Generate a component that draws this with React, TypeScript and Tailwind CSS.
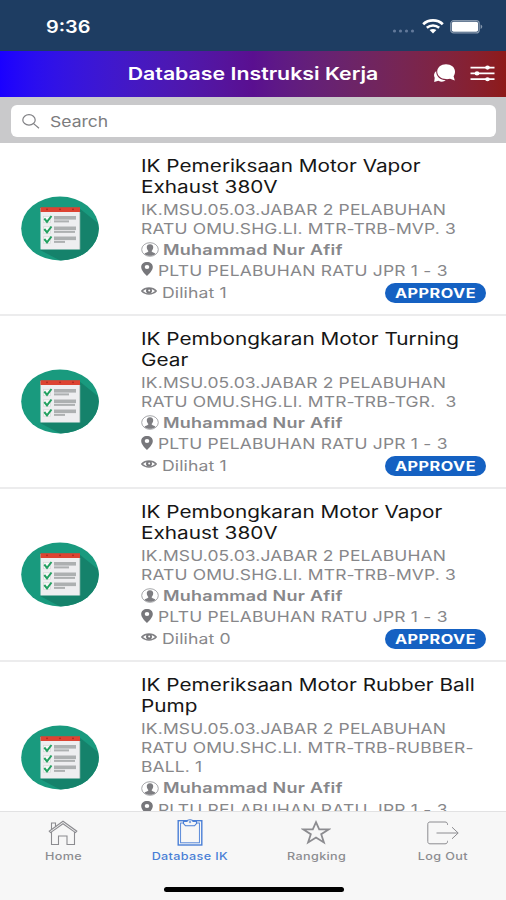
import type { ReactNode } from 'react';

interface Instruction {
  title: string[];
  code: string[];
  author: string;
  location: string;
  views: number;
}

const instructions: Instruction[] = [
  {
    title: ['IK Pemeriksaan Motor Vapor', 'Exhaust 380V'],
    code: ['IK.MSU.05.03.JABAR 2 PELABUHAN', 'RATU OMU.SHG.LI. MTR-TRB-MVP. 3'],
    author: 'Muhammad Nur Afif',
    location: 'PLTU PELABUHAN RATU JPR 1 - 3',
    views: 1,
  },
  {
    title: ['IK Pembongkaran Motor Turning', 'Gear'],
    code: ['IK.MSU.05.03.JABAR 2 PELABUHAN', 'RATU OMU.SHG.LI. MTR-TRB-TGR.  3'],
    author: 'Muhammad Nur Afif',
    location: 'PLTU PELABUHAN RATU JPR 1 - 3',
    views: 1,
  },
  {
    title: ['IK Pembongkaran Motor Vapor', 'Exhaust 380V'],
    code: ['IK.MSU.05.03.JABAR 2 PELABUHAN', 'RATU OMU.SHG.LI. MTR-TRB-MVP. 3'],
    author: 'Muhammad Nur Afif',
    location: 'PLTU PELABUHAN RATU JPR 1 - 3',
    views: 0,
  },
  {
    title: ['IK Pemeriksaan Motor Rubber Ball', 'Pump'],
    code: ['IK.MSU.05.03.JABAR 2 PELABUHAN', 'RATU OMU.SHC.LI. MTR-TRB-RUBBER-', 'BALL. 1'],
    author: 'Muhammad Nur Afif',
    location: 'PLTU PELABUHAN RATU JPR 1 - 3',
    views: 1,
  },
];

function StatusBar() {
  return (
    <div className="flex h-[51px] shrink-0 items-start bg-[#1e3d62] pl-[46px] pr-[22px] pt-[15px] text-white">
      <span className="origin-left scale-x-[1.17] text-[17px] font-semibold leading-6">9:36</span>
      <div className="ml-auto flex h-6 items-center">
        <svg width="24" height="4" viewBox="0 0 24 4" className="mr-[6px] mt-[8px]" fill="#62799a">
          <circle cx="2.5" cy="2" r="1.6" />
          <circle cx="8.5" cy="2" r="1.6" />
          <circle cx="14.5" cy="2" r="1.6" />
          <circle cx="20.5" cy="2" r="1.6" />
        </svg>
        <svg width="22" height="15" viewBox="0 0 22 15" className="mb-px mr-[6px]" fill="none" stroke="white">
          <path d="M1.2 5.2C6.6 0.2 15.4 0.2 20.8 5.2" strokeWidth="2.8" />
          <path d="M4.8 8.7C8.4 5.6 13.6 5.6 17.2 8.7" strokeWidth="2.5" />
          <path d="M11 14.4L7.6 11.1C9.5 9.5 12.5 9.5 14.4 11.1Z" fill="white" stroke="none" />
        </svg>
        <svg width="34" height="14" viewBox="0 0 34 14">
          <rect x="0.7" y="0.7" width="28.5" height="12.2" rx="3" fill="none" stroke="#8798ad" strokeWidth="1.2" />
          <rect x="1.8" y="1.8" width="26.3" height="10" rx="1.8" fill="white" />
          <path d="M30.6 4.6C32.8 5.4 32.8 8.2 30.6 9Z" fill="#8798ad" />
        </svg>
      </div>
    </div>
  );
}

function Header() {
  return (
    <div className="relative flex h-[46px] shrink-0 items-center justify-center bg-linear-to-r from-[#1a00ff] via-[#5a0f90] to-[#8e1a18] text-white">
      <h1 className="scale-x-[1.217] whitespace-nowrap text-[17.5px] font-semibold">Database Instruksi Kerja</h1>
      <div className="absolute right-[11px] top-[12px] flex items-center gap-[14px]">
        <svg width="23" height="20" viewBox="0 0 23 20" fill="white">
          <path d="M13 1.2C18 1.2 22 4.2 22 8.6C22 10.6 21.5 12 20.6 13.2L21.8 17.4L17 15.7C15.8 16 14.4 16.2 13 16.1C8 16 4.2 12.8 4.2 8.6C4.2 4.4 8 1.2 13 1.2Z" />
          <path d="M3.2 8C0.9 9.9 0.5 12.5 1.7 14.7L1.2 19L5.4 17.8C8 19.2 11 18.9 12.8 17.3C7.4 17.2 3 13.5 3.2 8Z" />
        </svg>
        <svg width="25" height="20" viewBox="0 0 25 20" fill="white" stroke="white" strokeWidth="1.7">
          <path d="M0.5 4.6H24.5M0.5 10.4H24.5M0.5 16.2H24.5" />
          <ellipse cx="17.5" cy="4.6" rx="1.5" ry="1.2" />
          <ellipse cx="7" cy="10.4" rx="1.5" ry="1.2" />
          <ellipse cx="17.5" cy="16.2" rx="1.5" ry="1.2" />
        </svg>
      </div>
    </div>
  );
}

function SearchBar() {
  return (
    <div className="h-[46px] shrink-0 bg-[#c9c9cb] px-[11px] pt-[8px]">
      <div className="flex h-[32px] w-[485px] items-center rounded-[6px] bg-white pl-[11px] text-[#7c7c7e]">
        <svg width="18" height="15" viewBox="0 0 18 15" fill="none" stroke="#808084" strokeWidth="1.2">
          <ellipse cx="7" cy="5.9" rx="6.2" ry="5.2" />
          <path d="M11.6 9.6L17 14.2" />
        </svg>
        <span className="ml-[10px] mt-[2px] origin-left scale-x-[1.17] text-[15px]">Search</span>
      </div>
    </div>
  );
}

function ChecklistBadge() {
  return (
    <svg width="78" height="65" viewBox="0 0 78 65" className="mb-px ml-[21px] shrink-0">
      <defs>
        <clipPath id="disc">
          <ellipse cx="39" cy="32.5" rx="38.8" ry="32" />
        </clipPath>
      </defs>
      <g clipPath="url(#disc)">
        <rect width="78" height="65" fill="#199a7e" />
        <path d="M58 12L78 28V65H40L19 54Z" fill="#15826b" />
      </g>
      <rect x="19.5" y="12" width="38.5" height="41.5" fill="#eeeef0" />
      <rect x="58" y="16" width="1.2" height="37.5" fill="#c3cfcc" />
      <rect x="19.5" y="11.2" width="39.5" height="4.8" fill="#dd4332" />
      <g fill="#a8281f">
        <circle cx="26" cy="13.3" r="0.9" />
        <circle cx="39" cy="13.3" r="0.9" />
        <circle cx="52" cy="13.3" r="0.9" />
      </g>
      {[23.5, 34, 44].map((y) => (
        <g key={y}>
          <rect x="22.5" y={y - 3.2} width="7" height="6.4" fill="#fafafa" stroke="#d3d8d6" strokeWidth="0.7" />
          <path d={`M23.3 ${y - 1}L26 ${y + 2.3}L30.5 ${y - 3.5}`} fill="none" stroke="#23a061" strokeWidth="2" />
          <rect x="33" y={y - 3.5} width="22" height="3.6" fill="#adb0b1" />
          <rect x="33" y={y + 0.9} width={y === 44 ? 11 : y === 23.5 ? 15 : 21} height="2" fill="#adb0b1" />
        </g>
      ))}
    </svg>
  );
}

function UserIcon() {
  return (
    <svg width="18" height="15" viewBox="0 0 18 15">
      <ellipse cx="9" cy="7.5" rx="8.3" ry="6.8" fill="none" stroke="#9c9da0" strokeWidth="0.9" />
      <path d="M9 2.2C11.2 2.2 12.4 3.6 12.2 5.5C12.1 7.1 11.3 8.4 10.6 9C10.6 10.5 13.7 10.3 14.6 12C11.5 14.4 6.5 14.4 3.4 12C4.3 10.3 7.4 10.5 7.4 9C6.7 8.4 5.9 7.1 5.8 5.5C5.6 3.6 6.8 2.2 9 2.2Z" fill="#7d7d81" />
    </svg>
  );
}

function PinIcon() {
  return (
    <svg width="12" height="14" viewBox="0 0 12 14" className="mb-[3px]" fill="#77777b">
      <path fillRule="evenodd" d="M6 0C9.3 0 11.8 2.1 11.8 4.9C11.8 8.2 8.6 11.3 6 14C3.4 11.3 0.2 8.2 0.2 4.9C0.2 2.1 2.7 0 6 0ZM6 2.9A2.3 2.1 0 1 0 6 7.1A2.3 2.1 0 1 0 6 2.9Z" />
    </svg>
  );
}

function EyeIcon() {
  return (
    <svg width="16" height="10" viewBox="0 0 16 10" className="mb-[2px]">
      <path d="M0.8 5C4.5 0.9 11.5 0.9 15.2 5C11.5 8.9 4.5 8.9 0.8 5Z" fill="none" stroke="#808084" strokeWidth="1.5" />
      <ellipse cx="8" cy="4.8" rx="3" ry="2.8" fill="#77777b" />
      <circle cx="8.2" cy="4.6" r="1" fill="white" />
    </svg>
  );
}

function InstructionRow({ item }: { item: Instruction }) {
  return (
    <div className="flex shrink-0 items-center border-b-2 border-[#ececed] pb-[11.2px] pt-[12.5px] text-[#87878a]">
      <ChecklistBadge />
      <div className="ml-[42px] flex-1">
        <div className="mb-[1.5px] text-[17px] leading-[21.3px] text-[#161616]">
          {item.title.map((line) => (
            <div key={line} className="origin-left scale-x-[1.221] whitespace-pre">{line}</div>
          ))}
        </div>
        <div className="mb-[1px] text-[14.3px] leading-[19.2px] tracking-[0.13px]">
          {item.code.map((line) => (
            <div key={line} className="origin-left scale-x-[1.22] whitespace-pre">{line}</div>
          ))}
        </div>
        <div className="flex h-[21.3px] items-center text-[14.5px] font-semibold">
          <UserIcon />
          <span className="ml-[4px] origin-left scale-x-[1.24] whitespace-nowrap tracking-[0.2px]">{item.author}</span>
        </div>
        <div className="flex h-[21.3px] items-center text-[14.3px]">
          <PinIcon />
          <span className="ml-[5px] origin-left scale-x-[1.22] whitespace-nowrap tracking-[0.18px]">{item.location}</span>
        </div>
        <div className="flex h-[21.3px] items-center text-[14.3px]">
          <EyeIcon />
          <span className="ml-[5px] origin-left scale-x-[1.23] whitespace-nowrap tracking-[0.1px]">Dilihat {item.views}</span>
          <span className="ml-auto mr-[20px] mt-[2px] flex h-[20px] w-[101px] items-center justify-center rounded-full bg-[#1561c2] text-white">
            <span className="scale-x-[1.25] text-[13px] font-bold tracking-[0.4px]">APPROVE</span>
          </span>
        </div>
      </div>
    </div>
  );
}

function Tab({ label, active, children }: { label: string; active?: boolean; children: ReactNode }) {
  return (
    <div className={`flex flex-1 flex-col items-center pt-[6px] ${active ? 'text-[#4a7fd6]' : 'text-[#8c8c90]'}`}>
      <div className="flex h-[29px] items-center">{children}</div>
      <span className="mt-px scale-x-[1.2] whitespace-nowrap text-[10.5px] font-medium leading-[18px] tracking-[0.3px]">{label}</span>
    </div>
  );
}

function TabBar() {
  return (
    <div className="flex h-[89px] shrink-0 flex-col items-center border-t border-[#e2e2e3] bg-[#f7f7f7]">
      <div className="flex w-full">
        <Tab label="Home">
          <svg width="30" height="26" viewBox="0 0 30 26" fill="none" stroke="currentColor" strokeWidth="1.1">
            <path d="M1.2 11.2L15 1.2L28.8 11.2L27.5 12.6L15 3.7L2.5 12.6Z" />
            <path d="M3.5 9.4V3H7.5V6.5M3.5 12V24.5H10.5V16H19V24.5H26.5V12" />
          </svg>
        </Tab>
        <Tab label="Database IK" active>
          <svg width="26" height="27" viewBox="0 0 26 27" fill="none" stroke="currentColor">
            <rect x="1.2" y="1.7" width="23.6" height="24.3" strokeWidth="1.4" />
            <rect x="3.6" y="4" width="18.8" height="19.8" strokeWidth="0.9" />
            <path d="M6.5 2.5H10C10.4 0.2 15.6 0.2 16 2.5H19.5V4.5L17.5 6.8H8.5L6.5 4.5Z" fill="#f7f7f7" strokeWidth="1.1" />
            <circle cx="13" cy="3" r="0.8" strokeWidth="0.8" />
          </svg>
        </Tab>
        <Tab label="Rangking">
          <svg width="30" height="25" viewBox="0 0 30 25" fill="none" stroke="currentColor" strokeWidth="1.8">
            <path d="M15 2.2L18.2 9.4H27.6L20.2 14.2L22.9 22.5L15 17.5L7.1 22.5L9.8 14.2L2.4 9.4H11.8Z" />
          </svg>
        </Tab>
        <Tab label="Log Out">
          <svg width="32" height="24" viewBox="0 0 32 24" fill="none" stroke="currentColor" strokeWidth="1">
            <path d="M20.5 4V3.2C20.5 1.8 19.5 1 18 1H3C1.6 1 0.8 1.8 0.8 3.2V20.6C0.8 22 1.6 22.8 3 22.8H18C19.5 22.8 20.5 22 20.5 20.6V19.8" />
            <path d="M9.5 12H31M25 6.2L31.2 12L25 17.8" />
          </svg>
        </Tab>
      </div>
      <div className="ml-px mt-[21px] h-[5px] w-[180px] rounded-full bg-black" />
    </div>
  );
}

export default function App() {
  return (
    <div className="flex h-[900px] w-[506px] flex-col overflow-hidden bg-white font-['Inter',sans-serif]">
      <StatusBar />
      <Header />
      <SearchBar />
      <div className="flex min-h-0 flex-1 flex-col overflow-hidden">
        {instructions.map((item) => (
          <InstructionRow key={item.title[0]} item={item} />
        ))}
      </div>
      <TabBar />
    </div>
  );
}
